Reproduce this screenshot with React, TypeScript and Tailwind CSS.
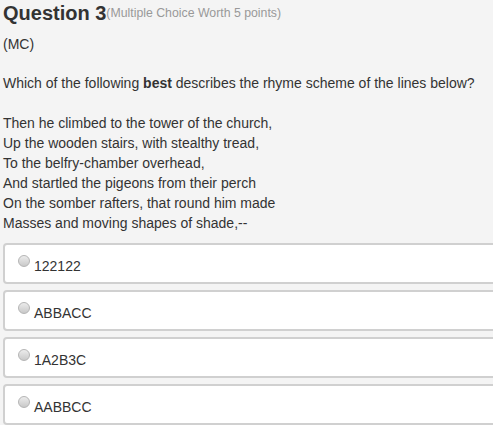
import React from "react";

const lines = [
  "Then he climbed to the tower of the church,",
  "Up the wooden stairs, with stealthy tread,",
  "To the belfry-chamber overhead,",
  "And startled the pigeons from their perch",
  "On the somber rafters, that round him made",
  "Masses and moving shapes of shade,--",
];

const options = ["122122", "ABBACC", "1A2B3C", "AABBCC"];

export default function App() {
  return (
    <div
      className="w-[493px] h-[425px] overflow-hidden bg-[#f4f4f4] text-[#333] pl-[3px]"
      style={{ fontFamily: '"Liberation Sans", Arial, sans-serif' }}
    >
      <div className="h-[26px] flex items-end leading-[25px]">
        <span className="text-[20px] font-bold text-[#333]">Question 3</span>
        <span className="text-[12.3px] text-[#999]">(Multiple Choice Worth 5 points)</span>
      </div>
      <div className="text-[14px] leading-[20px] mt-[8px]">(MC)</div>
      <div className="text-[14px] leading-[20px] mt-[19px]">
        Which of the following <b>best</b> describes the rhyme scheme of the lines below?
      </div>
      <div className="text-[14px] leading-[20px] mt-[20px]">
        {lines.map((l) => (
          <div key={l}>{l}</div>
        ))}
      </div>
      <div className="mt-[10px] flex flex-col gap-[6px] w-[500px]">
        {options.map((o) => (
          <div
            key={o}
            className="h-[41px] bg-white border-2 border-[#d0d0d0] rounded-[4px] flex items-start pl-[13px] pt-[8px]"
          >
            <span className="mt-[2px] w-[12px] h-[12px] rounded-full border border-[#b5b5b5] bg-gradient-to-b from-[#ececec] to-[#c9c9c9] shrink-0" />
            <span className="ml-[4px] text-[14px] leading-[20px] mt-[3px]">{o}</span>
          </div>
        ))}
      </div>
    </div>
  );
}
